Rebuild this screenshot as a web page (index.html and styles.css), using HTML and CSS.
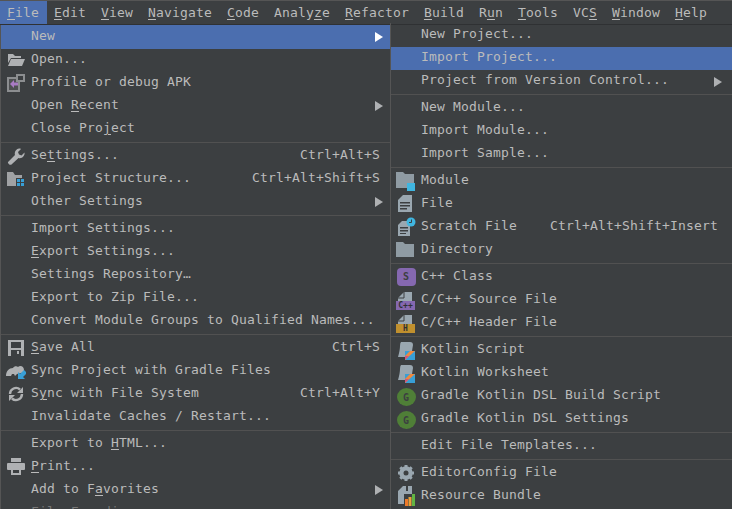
FILE: index.html

```html
<!DOCTYPE html>
<html lang="en">
<head>
<meta charset="utf-8"/>
<title>File menu</title>
<link rel="stylesheet" href="styles.css">
</head>
<body>
<div class="menubar">
  <span class="top active"><u>F</u>ile</span>
  <span class="top"><u>E</u>dit</span>
  <span class="top"><u>V</u>iew</span>
  <span class="top"><u>N</u>avigate</span>
  <span class="top"><u>C</u>ode</span>
  <span class="top">Analy<u>z</u>e</span>
  <span class="top"><u>R</u>efactor</span>
  <span class="top"><u>B</u>uild</span>
  <span class="top">R<u>u</u>n</span>
  <span class="top"><u>T</u>ools</span>
  <span class="top">VC<u>S</u></span>
  <span class="top"><u>W</u>indow</span>
  <span class="top"><u>H</u>elp</span>
</div>
<div class="menus">
  <div class="menu file-menu">
    <div class="row active high"><span class="ico"></span><span class="label">New</span><span class="arrow"></span></div>
    <div class="row"><span class="ico">
      <svg width="18" height="16" viewBox="0 0 18 16"><path d="M1 2h5l2 2h6v2H4L1 11z" fill="#afb1b3"/><path d="M4 7h14l-3 7H1z" fill="#afb1b3"/></svg>
    </span><span class="label">Open...</span></div>
    <div class="row"><span class="ico">
      <svg width="18" height="18" viewBox="0 0 18 18"><rect x="0" y="3" width="13" height="15" fill="#8c8e90"/><rect x="2" y="5" width="9" height="11" fill="#4e5052"/><rect x="9" y="0" width="9" height="8" fill="#8c8e90"/><rect x="11" y="2" width="5" height="4" fill="#3c3f41"/><path d="M3 10l4-4v2.500h4v3H7V14z" fill="#a97bc4"/></svg>
    </span><span class="label">Profile or debug APK</span></div>
    <div class="row"><span class="ico"></span><span class="label">Open <u>R</u>ecent</span><span class="arrow"></span></div>
    <div class="row"><span class="ico"></span><span class="label">Close Pro<u>j</u>ect</span></div>
    <div class="sep"></div>
    <div class="row"><span class="ico">
      <svg width="18" height="18" viewBox="0 0 18 18"><path d="M1 15l7-7c-1-3 1-6 4-6.500 1 0 1.500 0 2 .5l-3 3 1 2.500 2.500 1 3-3c.5 3-2 6.500-6 5.500l-7 6.500c-1.500 1-4-1-3.500-2.500z" fill="#afb1b3"/></svg>
    </span><span class="label">Se<u>t</u>tings...</span><span class="key">Ctrl+Alt+S</span></div>
    <div class="row"><span class="ico">
      <svg width="18" height="16" viewBox="0 0 18 16"><path d="M0 1h6l2 3h7v3H9v8H0z" fill="#a0a2a4"/><path d="M10 8h3v3h-3zM14 8h3v3h-3zM10 12h3v3h-3zM14 12h3v3h-3z" fill="#389fd6"/></svg>
    </span><span class="label">Project Structure...</span><span class="key">Ctrl+Alt+Shift+S</span></div>
    <div class="row"><span class="ico"></span><span class="label">Other Settings</span><span class="arrow"></span></div>
    <div class="sep"></div>
    <div class="row"><span class="ico"></span><span class="label">Import Settings...</span></div>
    <div class="row"><span class="ico"></span><span class="label"><u>E</u>xport Settings...</span></div>
    <div class="row"><span class="ico"></span><span class="label">Settings Repository…</span></div>
    <div class="row"><span class="ico"></span><span class="label">Export to Zip File...</span></div>
    <div class="row"><span class="ico"></span><span class="label">Convert Module Groups to Qualified Names...</span></div>
    <div class="sep"></div>
    <div class="row"><span class="ico">
      <svg width="16" height="16" viewBox="0 0 16 16"><path d="M0 0h16v16H0z" fill="#afb1b3"/><rect x="3" y="2" width="10" height="6" fill="#3c3f41"/><rect x="3" y="10" width="10" height="6" fill="#3c3f41"/><rect x="9" y="11" width="2" height="3" fill="#afb1b3"/></svg>
    </span><span class="label"><u>S</u>ave All</span><span class="key">Ctrl+S</span></div>
    <div class="row"><span class="ico">
      <svg width="20" height="18" viewBox="0 0 20 18"><path d="M0 14c0-5 3-8 7-8 1-2 4-2 5-1 2-2 6-1 6 3 0 2-1 3-3 3l-4 1-2 2-1-2H6l-1 2z" fill="#afb1b3"/><path d="M18 8l-4 4-2-2v7h7l-2-2 4-4z" fill="#389fd6"/></svg>
    </span><span class="label">Sync Project with Gradle Files</span></div>
    <div class="row"><span class="ico">
      <svg width="16" height="16" viewBox="0 0 16 16"><path d="M2 8a6 6 0 0 1 10-4.500M14 8a6 6 0 0 1-10 4.500" fill="none" stroke="#afb1b3" stroke-width="2.400"/><path d="M15 1v6H9zM1 15V9h6z" fill="#afb1b3"/></svg>
    </span><span class="label">S<u>y</u>nc with File System</span><span class="key">Ctrl+Alt+Y</span></div>
    <div class="row"><span class="ico"></span><span class="label">Invalidate Caches / Restart...</span></div>
    <div class="sep"></div>
    <div class="row"><span class="ico"></span><span class="label">Export to <u>H</u>TML...</span></div>
    <div class="row"><span class="ico">
      <svg width="18" height="17" viewBox="0 0 18 17"><rect x="4" y="0" width="10" height="4" fill="#afb1b3"/><rect x="0" y="5" width="18" height="7" rx="1" fill="#afb1b3"/><path d="M4 10h10v7H4z" fill="#3c3f41"/><path d="M4 10h10v7H4zM6 12v3h6v-3z" fill="#afb1b3" fill-rule="evenodd"/></svg>
    </span><span class="label"><u>P</u>rint...</span></div>
    <div class="row"><span class="ico"></span><span class="label">Add to F<u>a</u>vorites</span><span class="arrow"></span></div>
    <div class="row"><span class="ico"></span><span class="label dim">File Encoding</span></div>
  </div>
  <div class="menu sub-menu">
    <div class="row first high"><span class="ico"></span><span class="label">New Project...</span></div>
    <div class="row active high"><span class="ico"></span><span class="label">Import Project...</span></div>
    <div class="row high"><span class="ico"></span><span class="label">Project from Version Control...</span><span class="arrow dull"></span></div>
    <div class="sep thin"></div>
    <div class="row"><span class="ico"></span><span class="label">New Module...</span></div>
    <div class="row"><span class="ico"></span><span class="label">Import Module...</span></div>
    <div class="row"><span class="ico"></span><span class="label">Import Sample...</span></div>
    <div class="sep"></div>
    <div class="row"><span class="ico">
      <svg width="20" height="23" viewBox="0 0 20 23"><path d="M0 3h7l2 2h9v9h-7v5H0z" fill="#8f9ba3"/><rect x="11" y="14" width="8" height="8" fill="#40b6e0"/></svg>
    </span><span class="label">Module</span></div>
    <div class="row"><span class="ico">
      <svg width="20" height="23" viewBox="0 0 20 23"><path d="M2 8l5-5h9v17H2z" fill="#9aa7b0"/><path d="M4 10h10v1.500H4zM4 13h10v1.500H4zM4 16h7v1.500H4z" fill="#3c3f41"/></svg>
    </span><span class="label">File</span></div>
    <div class="row"><span class="ico">
      <svg width="20" height="23" viewBox="0 0 20 23"><path d="M2 10l4-4h8v15H2z" fill="#9aa7b0"/><path d="M4 12h8v1.500H4zM4 15h8v1.500H4zM4 18h6v1H4z" fill="#3c3f41"/><circle cx="15" cy="7" r="4.500" fill="#40b6e0"/><path d="M15.500 4.500v3H13" fill="none" stroke="#3c3f41"/></svg>
    </span><span class="label">Scratch File</span><span class="key">Ctrl+Alt+Shift+Insert</span></div>
    <div class="row"><span class="ico">
      <svg width="20" height="23" viewBox="0 0 20 23"><path d="M0 4h7l2 2h9v13H0z" fill="#8f9ba3"/></svg>
    </span><span class="label">Directory</span></div>
    <div class="sep"></div>
    <div class="row"><span class="ico"><span class="badge cclass">S</span></span><span class="label">C++ Class</span></div>
    <div class="row"><span class="ico">
      <svg width="20" height="23" viewBox="0 0 20 23"><path d="M2 10l6-6h8v10H2z" fill="#9aa7b0"/><path d="M8 4v6H2" fill="none" stroke="#3c3f41"/></svg><span class="tag src">C++</span>
    </span><span class="label">C/C++ Source File</span></div>
    <div class="row"><span class="ico">
      <svg width="20" height="23" viewBox="0 0 20 23"><path d="M2 10l6-6h8v10H2z" fill="#9aa7b0"/><path d="M8 4v6H2" fill="none" stroke="#3c3f41"/></svg><span class="tag hdr">H</span>
    </span><span class="label">C/C++ Header File</span></div>
    <div class="sep"></div>
    <div class="row"><span class="ico">
      <svg width="20" height="23" viewBox="0 0 20 23"><path d="M5 4h9q3 0 3 3l-1 6h-6v6H2q2-7 2-11 0-3 1-4z" fill="#9aa7b0"/><rect x="9" y="13" width="10" height="9" fill="#389fd6"/><path d="M14 13h5l-10 9v-4z" fill="#f0883e"/><path d="M9 18l4 0-4 4z" fill="#d0567e"/><path d="M14 17.500L19 22h-9z" fill="#389fd6"/></svg>
    </span><span class="label">Kotlin Script</span></div>
    <div class="row"><span class="ico">
      <svg width="20" height="23" viewBox="0 0 20 23"><path d="M5 4h9q3 0 3 3l-1 6h-6v6H2q2-7 2-11 0-3 1-4z" fill="#9aa7b0"/><rect x="9" y="13" width="10" height="9" fill="#389fd6"/><path d="M14 13h5l-10 9v-4z" fill="#f0883e"/><path d="M9 18l4 0-4 4z" fill="#d0567e"/><path d="M14 17.500L19 22h-9z" fill="#389fd6"/></svg>
    </span><span class="label">Kotlin Worksheet</span></div>
    <div class="row"><span class="ico"><span class="badge grad">G</span></span><span class="label">Gradle Kotlin DSL Build Script</span></div>
    <div class="row"><span class="ico"><span class="badge grad">G</span></span><span class="label">Gradle Kotlin DSL Settings</span></div>
    <div class="sep"></div>
    <div class="row"><span class="ico"></span><span class="label">Edit File Templates...</span></div>
    <div class="sep"></div>
    <div class="row"><span class="ico">
      <svg width="18" height="18" viewBox="0 0 18 18"><circle cx="9" cy="9" r="5" fill="none" stroke="#9aa7b0" stroke-width="3.500"/><path d="M9 1v16M1 9h16M3.300 3.300l11.400 11.400M14.700 3.300L3.300 14.700" stroke="#9aa7b0" stroke-width="3"/><circle cx="9" cy="9" r="2.500" fill="#3c3f41"/></svg>
    </span><span class="label">EditorConfig File</span></div>
    <div class="row"><span class="ico">
      <svg width="20" height="23" viewBox="0 0 20 23"><path d="M2 7l5-5h3v5h2V2h4v8H8v10H2z" fill="#9aa7b0"/><rect x="9" y="15" width="3" height="7" fill="#ed7a2a"/><rect x="12.500" y="13" width="3" height="9" fill="#e8a33a"/><rect x="16" y="10" width="3" height="12" fill="#62b543"/></svg>
    </span><span class="label">Resource Bundle</span></div>
  </div>
</div>
</body>
</html>
```

FILE: styles.css

```css
html, body { margin: 0; padding: 0; height: 100%; overflow: hidden; }
body {
  background: #3c3f41;
  color: #bbbbbb;
  font-family: "DejaVu Sans Mono", monospace;
  font-size: 13px;
  letter-spacing: 0.17px;
}
u { text-underline-offset: 2px; }

.menubar {
  display: flex;
  height: 23px;
  border-top: 1px solid #555;
  border-bottom: 1px solid #2f3133;
}
.top { padding: 0 8px 0 7px; line-height: 23px; }
.top.active { background: #4b6eaf; }

.menus { display: flex; height: 500px; }
.menu { border-left: 1px solid #555; box-sizing: border-box; }
.file-menu { width: 390px; flex: none; }
.sub-menu { flex: 1; margin-top: -2px; }

.row { display: flex; align-items: center; height: 23px; padding-right: 7px; white-space: nowrap; }
.sub-menu .row { padding-right: 11px; }
.sub-menu .first { height: 24px; }
.row.active { background: #4b6eaf; }
.file-menu .row.active { height: 24px; margin-bottom: -1px; }
.ico { position: relative; width: 30px; height: 23px; flex: none; display: flex; align-items: center; justify-content: center; }
.label { flex: 1; padding-bottom: 2px; }
.high .label { padding-bottom: 4px; }
.key { margin: 0 3px 2px 20px; }
.dim { color: #777; }
.sep { height: 4px; display: flex; align-items: center; }
.sep.thin { height: 3px; }
.sep::before { content: ""; flex: 1; height: 1px; background: #515151; }

.arrow {
  width: 0; height: 0;
  border-left: 8px solid #afb1b3;
  border-top: 5.5px solid transparent;
  border-bottom: 5.5px solid transparent;
}
.row.active .arrow { border-left-color: #fff; }
.arrow.dull { margin-right: -1px; }

.badge {
  width: 19px; height: 18px;
  display: flex; align-items: center; justify-content: center;
  font-size: 10px; font-weight: bold; color: #3c3f41;
  letter-spacing: 0;
}
.cclass { background: #8568b0; border-radius: 4px; }
.grad { background: #4f7f37; border-radius: 50%; margin-top: 3px; }

.tag {
  position: absolute; left: 5px; bottom: 1px;
  width: 19px; height: 9px; line-height: 9px;
  font-size: 8px; font-weight: bold; text-align: center;
  color: #2f3133; letter-spacing: 0;
}
.src { background: #8568b0; }
.hdr { background: #c0902e; }
```
